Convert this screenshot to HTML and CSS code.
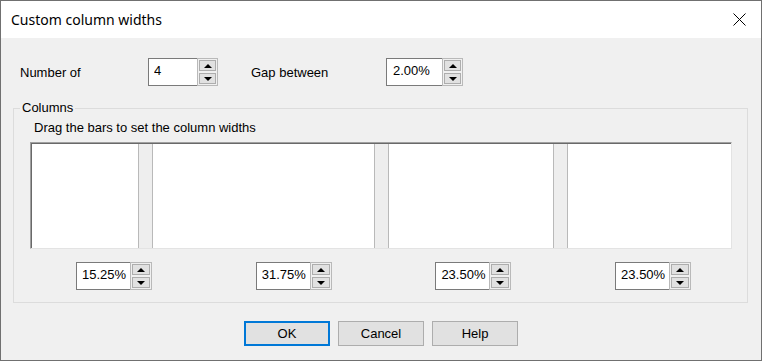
FILE: index.html
```html
<!DOCTYPE html>
<html lang="en">
<head>
  <meta charset="utf-8" />
  <title>Custom column widths</title>
  <link rel="stylesheet" href="styles.css">
</head>
<body>
  <div class="dialog">
    <div class="titlebar">
      <span class="title">Custom column widths</span>
      <span class="close">
        <svg width="13" height="13" viewBox="0 0 13 13">
          <path d="M0.5 0.5 L12.5 12.5 M12.5 0.5 L0.5 12.5" stroke="#000" stroke-width="1" fill="none" />
        </svg>
      </span>
    </div>

    <div class="content">
      <div class="top-row">
        <label class="field-label" for="col-count">Number of</label>
        <div class="spin">
          <input id="col-count" class="spin-value w-count" type="text" value="4">
          <span class="arrows"><span class="arrow-btn"><i class="up"></i></span><span class="arrow-btn"><i class="down"></i></span></span>
        </div>
        <label class="field-label gap-label" for="col-gap">Gap between</label>
        <div class="spin">
          <input id="col-gap" class="spin-value w-gap" type="text" value="2.00%">
          <span class="arrows"><span class="arrow-btn"><i class="up"></i></span><span class="arrow-btn"><i class="down"></i></span></span>
        </div>
      </div>

      <fieldset class="columns">
        <legend>Columns</legend>
        <p class="hint">Drag the bars to set the column widths</p>
        <div class="col-frame">
          <div class="col-area">
            <div class="col" style="flex-grow:15.25"></div>
            <div class="bar"></div>
            <div class="col" style="flex-grow:31.75"></div>
            <div class="bar"></div>
            <div class="col" style="flex-grow:23.5"></div>
            <div class="bar"></div>
            <div class="col" style="flex-grow:23.5"></div>
          </div>
        </div>
        <div class="col-spins">
          <div class="spin">
            <input class="spin-value w-col" type="text" value="15.25%">
            <span class="arrows wide"><span class="arrow-btn"><i class="up"></i></span><span class="arrow-btn"><i class="down"></i></span></span>
          </div>
          <div class="spin">
            <input class="spin-value w-col" type="text" value="31.75%">
            <span class="arrows wide"><span class="arrow-btn"><i class="up"></i></span><span class="arrow-btn"><i class="down"></i></span></span>
          </div>
          <div class="spin">
            <input class="spin-value w-col" type="text" value="23.50%">
            <span class="arrows wide"><span class="arrow-btn"><i class="up"></i></span><span class="arrow-btn"><i class="down"></i></span></span>
          </div>
          <div class="spin">
            <input class="spin-value w-col" type="text" value="23.50%">
            <span class="arrows wide"><span class="arrow-btn"><i class="up"></i></span><span class="arrow-btn"><i class="down"></i></span></span>
          </div>
        </div>
      </fieldset>

      <div class="buttons">
        <button class="btn default">OK</button>
        <button class="btn">Cancel</button>
        <button class="btn">Help</button>
      </div>
    </div>
  </div>
</body>
</html>
```

FILE: styles.css
```css
body {
  margin: 0;
  background: #FFF;
  font: normal 13px/15px "Liberation Sans", Arial, sans-serif;
  color: #000;
}

.dialog {
  width: 762px;
  height: 361px;
  box-sizing: border-box;
  border: solid 1px #707070;
  background: #F0F0F0;
  overflow: hidden;
}

/* title bar */
.titlebar {
  height: 37px;
  background: #FFF;
  display: flex;
  justify-content: space-between;
  align-items: center;
}

.titlebar .title {
  padding-left: 10px;
  font: normal 14px/36px "Noto Sans", "Open Sans", sans-serif;
}

.titlebar .close {
  width: 44px;
  height: 37px;
  display: flex;
  align-items: center;
  justify-content: center;
}

.content {
  padding-top: 20px;
}

/* top row */
.top-row {
  display: flex;
  align-items: center;
  padding-left: 19px;
}

.field-label {
  width: 128px;
}

.field-label.gap-label {
  width: 135px;
  margin-left: 33px;
}

/* spin boxes */
.spin {
  display: flex;
  height: 28px;
}

.spin-value {
  box-sizing: border-box;
  height: 28px;
  margin: 0;
  padding: 0 0 4px 5px;
  border: solid 1px #7A7A7A;
  border-right: none;
  background: #FFF;
  font: normal 13px/15px "Liberation Sans", Arial, sans-serif;
  color: #000;
  outline: none;
}

.w-count { width: 49px; }
.w-gap { width: 56px; padding-left: 6px; }
.w-col { width: 54px; }

.arrows {
  box-sizing: border-box;
  width: 21px;
  height: 28px;
  border: solid 1px #B9B9B9;
  padding: 1px;
  display: flex;
  flex-direction: column;
  gap: 2px;
}

.arrows.wide {
  width: 22px;
}

.arrow-btn {
  flex: 1;
  background: #E1E1E1;
  border: solid 1px #ADADAD;
  display: flex;
  align-items: center;
  justify-content: center;
}

.arrow-btn i {
  width: 0;
  height: 0;
  border-left: 4px solid transparent;
  border-right: 4px solid transparent;
}

.arrow-btn .up {
  border-bottom: 4px solid #000;
}

.arrow-btn .down {
  border-top: 4px solid #000;
}

/* columns group */
.columns {
  margin: 14px 13px 0 12px;
  padding: 4px 15px 12px 16px;
  border: solid 1px #DCDCDC;
}

.columns legend {
  margin-left: -10px;
  padding: 0 2px;
  line-height: 16px;
}

.hint {
  margin: 0 0 7px;
  padding-left: 4px;
}

.col-frame {
  border-top: solid 1px #A0A0A0;
  border-left: solid 1px #A0A0A0;
  border-right: solid 1px #E3E3E3;
  border-bottom: solid 1px #E3E3E3;
}

.col-area {
  display: flex;
  height: 104px;
  border-top: solid 1px #696969;
  border-left: solid 1px #696969;
}

.col {
  flex-basis: 0;
  background: #FFF;
}

.bar {
  width: 13px;
  background: #EEEEEE;
  border-left: solid 1px #B9B9B9;
  border-right: solid 1px #B9B9B9;
}

.col-spins {
  display: flex;
  gap: 103.7px;
  margin-top: 13px;
  padding-left: 46px;
}

/* dialog buttons */
.buttons {
  display: flex;
  justify-content: center;
  gap: 8px;
  margin-top: 18px;
}

.btn {
  box-sizing: border-box;
  width: 86px;
  height: 25px;
  margin: 0;
  padding: 0;
  background: #E1E1E1;
  border: solid 1px #ADADAD;
  font: normal 13px/15px "Liberation Sans", Arial, sans-serif;
  color: #000;
}

.btn.default {
  border: solid 2px #0078D7;
}
```
